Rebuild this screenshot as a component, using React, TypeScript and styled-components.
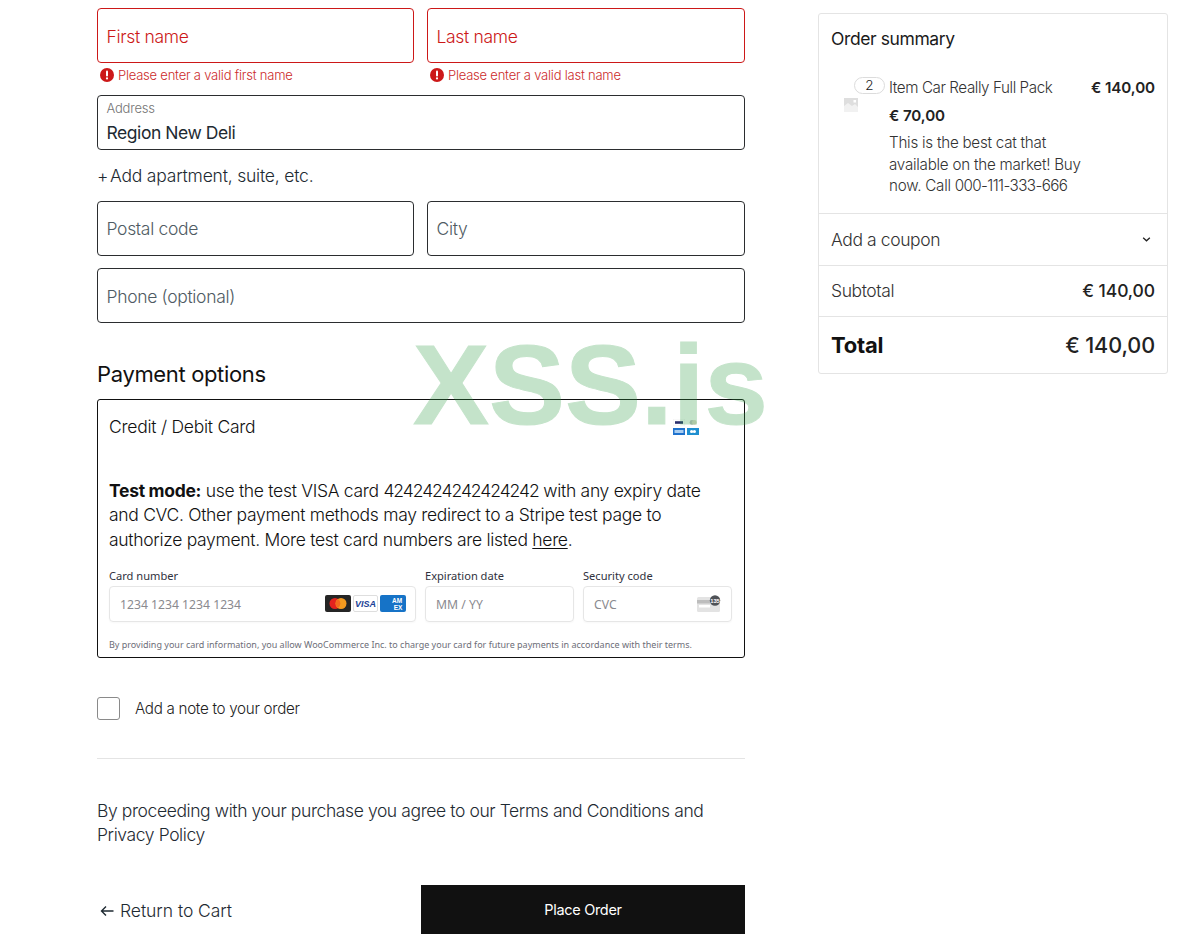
import React from "react";
import styled, { createGlobalStyle } from "styled-components";

const GlobalStyle = createGlobalStyle`
* {
  box-sizing: border-box;
}
body {
  margin: 0;
  padding: 0;
  background: #fff;
  color: #111;
  font-family: "Inter", "Noto Sans", sans-serif;
  font-weight: 300;
  overflow: hidden;
}
`;

const Page = styled.div`
  position: relative;
  width: 1177px;
  height: 943px;
  overflow: hidden;
  display: grid;
  grid-template-columns: 648px 350px;
  column-gap: 73px;
  padding: 8px 0 0 97px;
`;

const Main = styled.main`
  display: flex;
  flex-direction: column;
`;

const Row = styled.div`
  display: grid;
  grid-template-columns: 317px 318px;
  column-gap: 13px;
`;

const Field = styled.div<{ $error?: boolean }>`
  height: 55px;
  border: 1px solid ${({ $error }) => ($error ? "#cc1818" : "#2b2d2f")};
  border-radius: 4px;
  padding: 2px 8.5px 0;
  display: flex;
  flex-direction: column;
  justify-content: center;
  font-size: 17.5px;
  letter-spacing: -0.32px;
  color: ${({ $error }) => ($error ? "#cc1818" : "#4f5b63")};
`;

const PostalField = styled(Field)`
  padding-top: 0;
`;

const FloatLabel = styled.span`
  font-size: 13px;
  letter-spacing: -0.2px;
  line-height: 16px;
  margin-top: -5px;
  color: #757575;
`;

const FieldValue = styled.span`
  font-size: 17.5px;
  line-height: 26px;
  margin-top: 4px;
  margin-bottom: -4px;
  letter-spacing: -0.45px;
  font-weight: 400;
  color: #1e2a32;
`;

const ErrorText = styled.div`
  height: 32px;
  padding: 0 0 8px 3px;
  display: flex;
  align-items: center;
  gap: 4px;
  font-size: 13px;
  letter-spacing: -0.22px;
  color: #cc2b2b;
`;

const AddLink = styled.div`
  height: 51px;
  display: flex;
  align-items: center;
  white-space: pre;
  font-size: 17.5px;
  letter-spacing: -0.2px;
  color: #1e2a32;
`;

const AddPlus = styled.span`
  margin-right: -3px;
`;

const StackedRow = styled(Row)`
  margin-bottom: 12px;
`;

const Heading = styled.h2`
  margin: 35px 0 9px;
  font-size: 22px;
  line-height: 32px;
  font-weight: 400;
  letter-spacing: -0.35px;
  color: #111;
`;

const PaymentBox = styled.section`
  height: 259px;
  border: 1px solid #111;
  border-radius: 3px;
  padding: 0 11px;
`;

const PaymentHeader = styled.div`
  height: 53px;
  display: flex;
  align-items: center;
  justify-content: space-between;
  font-size: 17.5px;
  letter-spacing: -0.25px;
  color: #111;
`;

const MiniCards = styled.div`
  display: grid;
  grid-template-columns: 12px 12px;
  gap: 2px;
  margin: 0 34px 0 0;
`;

const TestNote = styled.p`
  margin: 26px 0 0;
  height: 73px;
  font-size: 17.5px;
  line-height: 24.4px;
  letter-spacing: -0.3px;
  color: #111;

  b {
    font-weight: 700;
  }
  u {
    text-underline-offset: 2px;
  }
`;

const CardDigits = styled.span`
  letter-spacing: -1.05px;
`;

const StripeGrid = styled.div`
  margin-top: 14.5px;
  display: grid;
  grid-template-columns: 307px 149px 149px;
  column-gap: 9px;
`;

const StripeField = styled.div`
  display: flex;
  flex-direction: column;
  font-family: "Noto Sans", sans-serif;
  font-weight: 400;
`;

const StripeLabel = styled.span`
  font-size: 11.1px;
  line-height: 18px;
  color: #30313d;
`;

const StripeInput = styled.div`
  height: 36px;
  margin-top: 1px;
  border: 1px solid #e6e6e6;
  border-radius: 4px;
  box-shadow: 0 1px 2px rgba(0, 0, 0, 0.03);
  padding: 1px 10px 0;
  display: flex;
  align-items: center;
  justify-content: space-between;
  font-size: 12.2px;
  color: #8a8a8f;
`;

const Brands = styled.div`
  display: flex;
  gap: 2px;
  margin: -1px -1px 0 0;
`;

const Legal = styled.p`
  margin: 16px 0 0;
  font-family: "Noto Sans", sans-serif;
  font-weight: 400;
  font-size: 9px;
  line-height: 14px;
  color: #6d6e78;
  white-space: nowrap;
`;

const NoteRow = styled.label`
  margin-top: 39px;
  display: flex;
  align-items: center;
  gap: 15px;
  font-size: 15.2px;
  letter-spacing: -0.3px;
  color: #222;
`;

const Checkbox = styled.span`
  width: 23px;
  height: 23px;
  border: 1px solid #8a8a8a;
  border-radius: 3px;
`;

const Divider = styled.hr`
  width: 100%;
  margin: 38px 0 0;
  border: 0;
  border-top: 1px solid #e4e4e4;
`;

const Terms = styled.p`
  margin: 40px 0 0;
  font-size: 17.5px;
  line-height: 24px;
  letter-spacing: -0.4px;
  color: #1e2a32;
`;

const Actions = styled.div`
  margin-top: 38px;
  display: flex;
  align-items: stretch;
  justify-content: space-between;
`;

const BackLink = styled.div`
  display: flex;
  align-items: center;
  gap: 6px;
  padding: 2px 0 0 3px;
  font-size: 17.5px;
  letter-spacing: -0.05px;
  color: #1e2a32;
`;

const PlaceOrder = styled.button`
  width: 324px;
  height: 49px;
  border: 0;
  background: #111;
  color: #fff;
  font-family: inherit;
  font-weight: 400;
  font-size: 14.5px;
  letter-spacing: -0.3px;
`;

const Summary = styled.aside`
  align-self: start;
  margin-top: 5px;
  width: 350px;
  border: 1px solid #e4e4e4;
  border-radius: 3px;
`;

const SummaryTitle = styled.h3`
  margin: 0;
  padding: 13px 12px 0;
  font-size: 17.5px;
  line-height: 24px;
  font-weight: 400;
  letter-spacing: -0.4px;
  color: #1a1a1a;
`;

const Item = styled.div`
  margin-top: 26px;
  padding: 0 12px 16px 70px;
  position: relative;
  display: grid;
  grid-template-columns: 1fr auto;
  border-bottom: 1px solid #e4e4e4;
`;

const QtyBadge = styled.span`
  position: absolute;
  left: 35px;
  top: 0;
  width: 31px;
  height: 17px;
  border: 1px solid #dcdcdc;
  border-radius: 9px;
  background: #fff;
  font-size: 13.5px;
  line-height: 15px;
  text-align: center;
  color: #1a1a1a;
`;

const Thumb = styled.span`
  position: absolute;
  left: 25px;
  top: 21px;
  display: flex;
`;

const ItemName = styled.span`
  font-size: 15.2px;
  line-height: 21px;
  letter-spacing: -0.42px;
  color: #333;
`;

const Price = styled.span`
  font-size: 15.2px;
  line-height: 21px;
  font-weight: 600;
  letter-spacing: -0.1px;
  color: #222;
`;

const UnitPrice = styled(Price)`
  grid-column: 1 / -1;
  margin-top: 7px;
`;

const ItemDesc = styled.p`
  grid-column: 1 / -1;
  margin: 6px 0 0;
  width: 200px;
  font-size: 15.2px;
  line-height: 21.5px;
  letter-spacing: -0.25px;
  color: #333;
`;

const PhoneDigits = styled.span`
  letter-spacing: -0.6px;
`;

const SummaryRow = styled.div<{ $height: number; $last?: boolean }>`
  height: ${({ $height }) => $height}px;
  padding: 0 12px;
  display: flex;
  align-items: center;
  justify-content: space-between;
  border-bottom: ${({ $last }) => ($last ? "0" : "1px solid #e4e4e4")};
  font-size: ${({ $last }) => ($last ? "21.6px" : "17.5px")};
  letter-spacing: -0.4px;
  color: #333;
`;

const RowAmount = styled.span`
  font-weight: 500;
  color: #222;
  letter-spacing: -0.1px;
`;

const TotalLabel = styled.span`
  font-size: 22px;
  font-weight: 700;
  color: #111;
  letter-spacing: -0.2px;
`;

const CouponChevron = styled.span`
  display: flex;
  margin-right: 4px;
`;

const Watermark = styled.div`
  position: absolute;
  left: 413px;
  top: 320px;
  font-family: "Liberation Sans", Arial, sans-serif;
  font-size: 114px;
  line-height: 130px;
  font-weight: 700;
  color: #2f9e44;
  -webkit-text-stroke: 1px #2f9e44;
  opacity: 0.28;
  pointer-events: none;
`;

const ErrorIcon = () => (
  <svg width="14" height="14" viewBox="0 0 14 14">
    <circle cx="7" cy="7" r="7" fill="#cc1818" />
    <rect x="6" y="2.6" width="2" height="5.8" rx="1" fill="#fff" />
    <circle cx="7" cy="10.4" r="1.1" fill="#fff" />
  </svg>
);

const BackArrow = () => (
  <svg width="14" height="12" viewBox="0 0 14 12" fill="none" stroke="#1e2a32" strokeWidth="1.4">
    <path d="M13.5 6H1.5M6 1.5 1.5 6 6 10.5" />
  </svg>
);

const Chevron = () => (
  <svg width="9" height="5" viewBox="0 0 10 6" fill="none" stroke="#222" strokeWidth="1.6">
    <path d="M1 1l4 3.5L9 1" />
  </svg>
);

const Placeholder = () => (
  <svg width="14" height="14" viewBox="0 0 14 14">
    <rect width="14" height="14" fill="#dedede" />
    <path d="M0 8l4-3 4 3 3-2 3 3v5H0z" fill="#f1f1f1" />
    <rect x="9.5" y="2" width="2.5" height="2.5" fill="#fff" />
  </svg>
);

const MasterCard = () => (
  <svg width="26" height="17" viewBox="0 0 26 17">
    <rect width="26" height="17" rx="2" fill="#252525" />
    <circle cx="10" cy="8.5" r="5.5" fill="#e3231f" />
    <circle cx="16" cy="8.5" r="5.5" fill="#f49a1f" />
    <path d="M13 4a5.5 5.5 0 0 1 0 9 5.5 5.5 0 0 1 0-9z" fill="#f26a1e" />
  </svg>
);

const VisaCard = () => (
  <svg width="25" height="17" viewBox="0 0 25 17">
    <rect x=".5" y=".5" width="24" height="16" rx="1.5" fill="#fff" stroke="#dedede" />
    <text x="12.5" y="12" textAnchor="middle" fontFamily="Liberation Sans" fontSize="9" fontWeight="700" fontStyle="italic" fill="#1a3f96">
      VISA
    </text>
  </svg>
);

const AmexCard = () => (
  <svg width="26" height="17" viewBox="0 0 26 17">
    <rect width="26" height="17" rx="2" fill="#1673c7" />
    <text x="17" y="8" textAnchor="middle" fontFamily="Liberation Sans" fontSize="6.5" fontWeight="700" fill="#fff">
      AM
    </text>
    <text x="18" y="14.5" textAnchor="middle" fontFamily="Liberation Sans" fontSize="6.5" fontWeight="700" fill="#fff">
      EX
    </text>
  </svg>
);

const CvcCard = () => (
  <svg width="24" height="18" viewBox="0 0 24 18">
    <rect y="2" width="23" height="15" rx="1.5" fill="#e3e3e3" />
    <rect y="5" width="23" height="3.5" fill="#bdbdbd" />
    <rect x="2" y="10" width="11" height="2.5" fill="#fff" />
    <circle cx="18" cy="5.5" r="5.2" fill="#4f5257" />
    <text x="18" y="7.6" textAnchor="middle" fontFamily="Liberation Sans" fontSize="5.8" fontWeight="700" fill="#fff">
      135
    </text>
  </svg>
);

const MiniVisa = () => (
  <svg width="12" height="7" viewBox="0 0 12 7">
    <rect width="12" height="7" fill="#fff" stroke="#e5e5e5" strokeWidth=".5" />
    <rect x="2" y="2.2" width="8" height="2.6" fill="#2b2f6e" />
  </svg>
);

const MiniMaster = () => (
  <svg width="12" height="7" viewBox="0 0 12 7">
    <circle cx="5" cy="3.5" r="2.4" fill="#c4c4c4" />
    <circle cx="7.4" cy="3.5" r="2.4" fill="#e2dccb" />
  </svg>
);

const MiniAmex = () => (
  <svg width="12" height="7" viewBox="0 0 12 7">
    <rect width="12" height="7" fill="#1f72cd" />
    <rect x="1.5" y="2" width="9" height="3" fill="#a9cdf0" />
  </svg>
);

const MiniDiscover = () => (
  <svg width="12" height="7" viewBox="0 0 12 7">
    <rect width="12" height="7" fill="#1f8fd0" />
    <circle cx="4.6" cy="3.5" r="1.6" fill="#fff" />
    <circle cx="7.4" cy="3.5" r="1.6" fill="#fff" />
  </svg>
);

export default function App() {
  return (
    <Page>
      <GlobalStyle />
      <Main>
        <Row>
          <div>
            <Field $error>First name</Field>
            <ErrorText>
              <ErrorIcon />
              Please enter a valid first name
            </ErrorText>
          </div>
          <div>
            <Field $error>Last name</Field>
            <ErrorText>
              <ErrorIcon />
              Please enter a valid last name
            </ErrorText>
          </div>
        </Row>
        <Field>
          <FloatLabel>Address</FloatLabel>
          <FieldValue>Region New Deli</FieldValue>
        </Field>
        <AddLink>
          <AddPlus>+</AddPlus> Add apartment, suite, etc.
        </AddLink>
        <StackedRow>
          <PostalField>Postal code</PostalField>
          <PostalField>City</PostalField>
        </StackedRow>
        <Field>Phone (optional)</Field>

        <Heading>Payment options</Heading>
        <PaymentBox>
          <PaymentHeader>
            Credit / Debit Card
            <MiniCards>
              <MiniVisa />
              <MiniMaster />
              <MiniAmex />
              <MiniDiscover />
            </MiniCards>
          </PaymentHeader>
          <TestNote>
            <b>Test mode:</b> use the test VISA card <CardDigits>4242424242424242</CardDigits> with any expiry date and
            CVC. Other payment methods may redirect to a Stripe test page to authorize payment. More test card numbers
            are listed <u>here</u>.
          </TestNote>
          <StripeGrid>
            <StripeField>
              <StripeLabel>Card number</StripeLabel>
              <StripeInput>
                1234 1234 1234 1234
                <Brands>
                  <MasterCard />
                  <VisaCard />
                  <AmexCard />
                </Brands>
              </StripeInput>
            </StripeField>
            <StripeField>
              <StripeLabel>Expiration date</StripeLabel>
              <StripeInput>MM / YY</StripeInput>
            </StripeField>
            <StripeField>
              <StripeLabel>Security code</StripeLabel>
              <StripeInput>
                CVC
                <CvcCard />
              </StripeInput>
            </StripeField>
          </StripeGrid>
          <Legal>
            By providing your card information, you allow WooCommerce Inc. to charge your card for future payments in
            accordance with their terms.
          </Legal>
        </PaymentBox>

        <NoteRow>
          <Checkbox />
          Add a note to your order
        </NoteRow>
        <Divider />
        <Terms>By proceeding with your purchase you agree to our Terms and Conditions and Privacy Policy</Terms>
        <Actions>
          <BackLink>
            <BackArrow />
            Return to Cart
          </BackLink>
          <PlaceOrder>Place Order</PlaceOrder>
        </Actions>
      </Main>

      <Summary>
        <SummaryTitle>Order summary</SummaryTitle>
        <Item>
          <QtyBadge>2</QtyBadge>
          <Thumb>
            <Placeholder />
          </Thumb>
          <ItemName>Item Car Really Full Pack</ItemName>
          <Price>€ 140,00</Price>
          <UnitPrice>€ 70,00</UnitPrice>
          <ItemDesc>
            This is the best cat that available on the market! Buy now. Call <PhoneDigits>000-111-333-666</PhoneDigits>
          </ItemDesc>
        </Item>
        <SummaryRow $height={52}>
          Add a coupon
          <CouponChevron>
            <Chevron />
          </CouponChevron>
        </SummaryRow>
        <SummaryRow $height={51}>
          Subtotal
          <RowAmount>€ 140,00</RowAmount>
        </SummaryRow>
        <SummaryRow $height={56} $last>
          <TotalLabel>Total</TotalLabel>
          <RowAmount>€ 140,00</RowAmount>
        </SummaryRow>
      </Summary>

      <Watermark>XSS.is</Watermark>
    </Page>
  );
}
